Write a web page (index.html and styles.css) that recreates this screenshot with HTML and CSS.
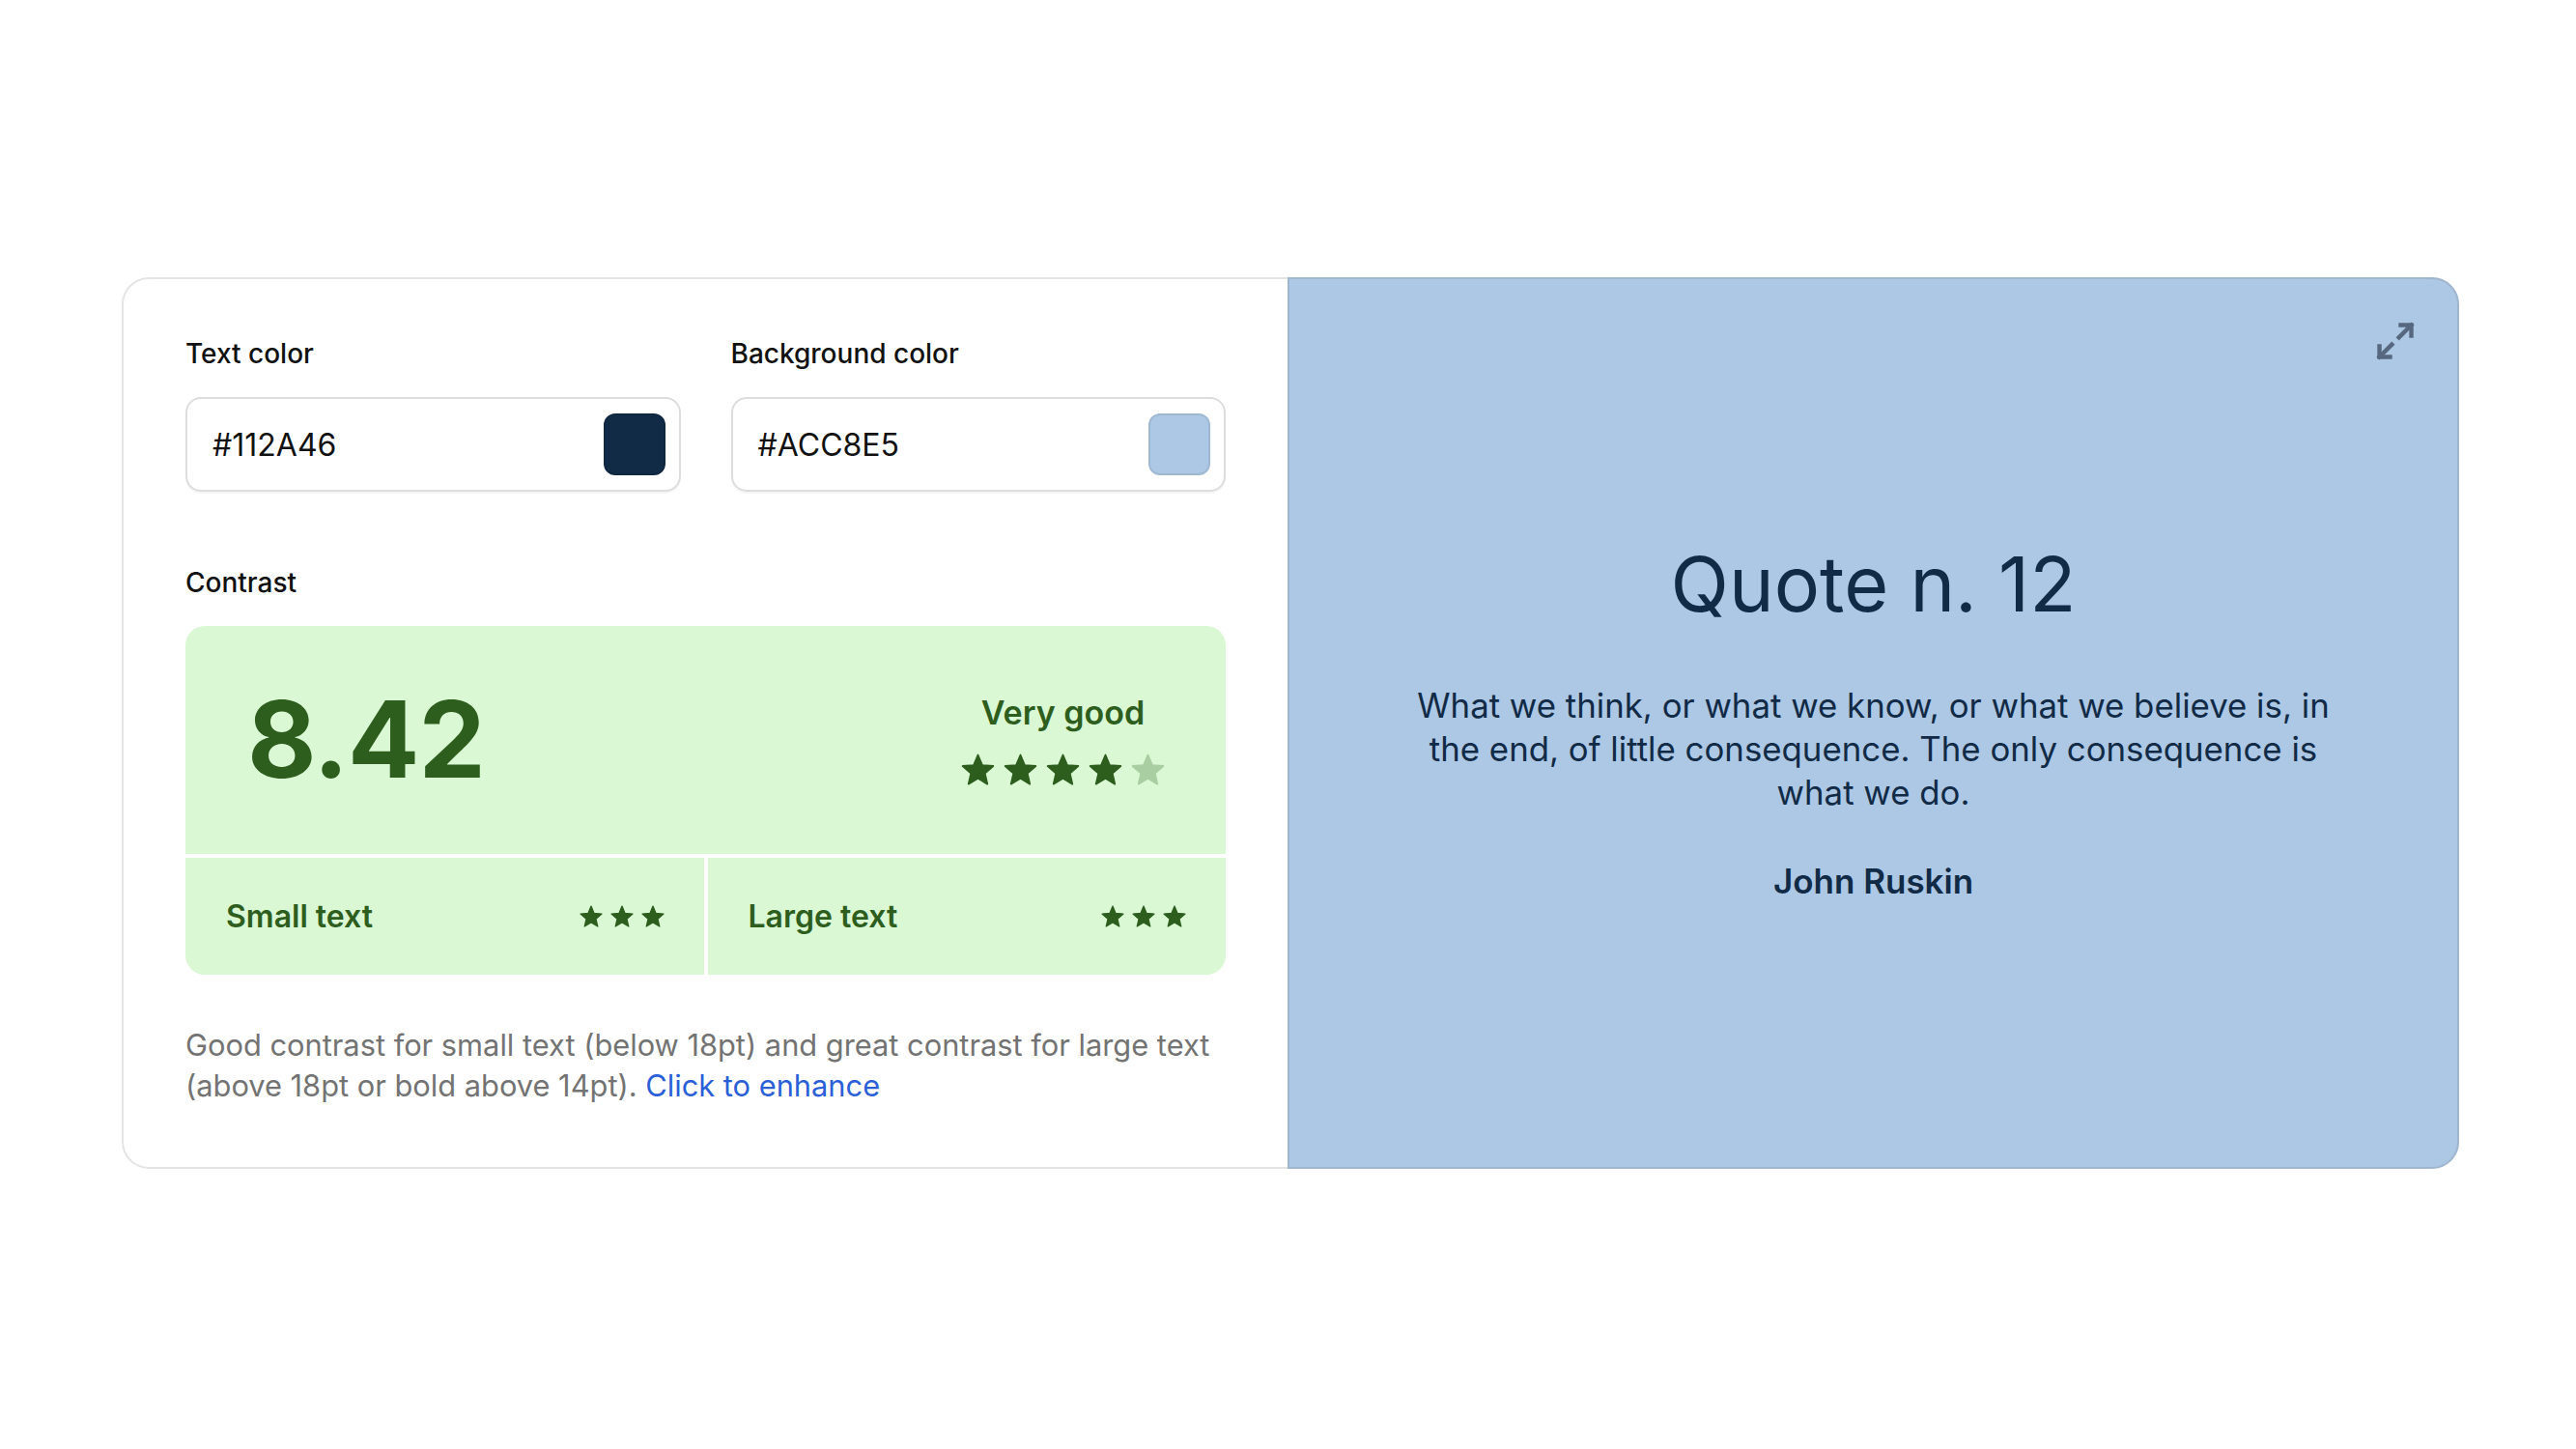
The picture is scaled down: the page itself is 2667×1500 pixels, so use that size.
FILE: index.html
```html
<!DOCTYPE html>
<html lang="en">
<head>
  <meta charset="UTF-8" />
  <title>Contrast checker</title>
  <link rel="stylesheet" href="styles.css">
</head>
<body>

  <svg class="defs" width="0" height="0">
    <symbol id="star" viewBox="0.6 0.6 22.8 21.8">
      <path d="M12 1.6 L14.94 8.55 L22.46 9.2 L16.76 14.15 L18.47 21.5 L12 17.6 L5.53 21.5 L7.24 14.15 L1.54 9.2 L9.06 8.55 Z" fill="currentColor" stroke="currentColor" stroke-width="1.2" stroke-linejoin="round" />
    </symbol>
  </svg>

  <div class="page">
    <div class="card">

      <div class="editor">
        <div class="fields">
          <div class="field">
            <label>Text color</label>
            <div class="color-input">
              <span>#112A46</span>
              <span class="swatch swatch-text"></span>
            </div>
          </div>
          <div class="field">
            <label>Background color</label>
            <div class="color-input">
              <span>#ACC8E5</span>
              <span class="swatch swatch-bg"></span>
            </div>
          </div>
        </div>

        <div class="contrast">
          <label>Contrast</label>
          <div class="score-box">
            <div class="score-main">
              <div class="score">8.42</div>
              <div class="rating">
                <div class="rating-text">Very good</div>
                <div class="stars big">
                  <svg><use href="#star" /></svg>
                  <svg><use href="#star" /></svg>
                  <svg><use href="#star" /></svg>
                  <svg><use href="#star" /></svg>
                  <svg class="off"><use href="#star" /></svg>
                </div>
              </div>
            </div>
            <div class="score-row">
              <div class="score-cell">
                <span>Small text</span>
                <div class="stars small">
                  <svg><use href="#star" /></svg>
                  <svg><use href="#star" /></svg>
                  <svg><use href="#star" /></svg>
                </div>
              </div>
              <div class="score-cell">
                <span>Large text</span>
                <div class="stars small">
                  <svg><use href="#star" /></svg>
                  <svg><use href="#star" /></svg>
                  <svg><use href="#star" /></svg>
                </div>
              </div>
            </div>
          </div>
          <p class="note">Good contrast for small text (below 18pt) and great contrast for large text (above 18pt or bold above 14pt). <a href="#">Click to enhance</a></p>
        </div>
      </div>

      <div class="preview">
        <button class="expand" title="Expand">
          <svg viewBox="0 0 24 24" fill="none" stroke="currentColor" stroke-width="2.4" stroke-linecap="square" stroke-linejoin="miter">
            <polyline points="15 3 21 3 21 9" />
            <polyline points="9 21 3 21 3 15" />
            <line x1="21" y1="3" x2="14" y2="10" />
            <line x1="3" y1="21" x2="10" y2="14" />
          </svg>
        </button>
        <h2>Quote n. 12</h2>
        <p class="quote">What we think, or what we know, or what we believe is, in the end, of little consequence. The only consequence is what we do.</p>
        <p class="author">John Ruskin</p>
      </div>

    </div>
  </div>

</body>
</html>
```

FILE: styles.css
```css
* {
  box-sizing: border-box;
}

body {
  margin: 0;
  background: #ffffff;
  font-family: 'Inter', 'Noto Sans', sans-serif;
  color: #111;
}

.defs {
  position: absolute;
}

.page {
  padding: 287px 0 0 126px;
}

.card {
  width: 2420px;
  display: grid;
  grid-template-columns: 1207px 1fr;
}

/* left side */
.editor {
  border: 2px solid #e4e4e4;
  border-right: none;
  border-radius: 28px 0 0 28px;
  padding: 60px 64px 63px 64px;
}

label {
  display: block;
  font-size: 28px;
  line-height: 34px;
  font-weight: 500;
  color: #111;
  margin-bottom: 28px;
}

.fields {
  display: grid;
  grid-template-columns: 1fr 1fr;
  gap: 52px;
}

.color-input {
  height: 98px;
  border: 2px solid #dddddd;
  border-radius: 16px;
  box-shadow: 0 2px 0 rgba(0,0,0,0.04);
  display: flex;
  align-items: center;
  justify-content: space-between;
  padding: 0 14px 0 26px;
  font-size: 32px;
  color: #111;
}

.swatch {
  width: 64px;
  height: 64px;
  border-radius: 12px;
  border: 2px solid rgba(0,0,0,0.07);
}

.swatch-text {
  background: #112A46;
}

.swatch-bg {
  background: #ACC8E5;
}

.contrast {
  margin-top: 77px;
}

.score-box {
  border-radius: 20px;
  overflow: hidden;
  display: flex;
  flex-direction: column;
  gap: 4px;
  background: #ffffff;
  color: #2d5e1e;
}

.score-main {
  height: 236px;
  background: #dbf8d5;
  display: flex;
  align-items: center;
  justify-content: space-between;
  padding: 0 63px 2px 64px;
}

.score {
  font-size: 110px;
  font-weight: 700;
  letter-spacing: -1px;
  line-height: 1;
}

.rating {
  display: flex;
  flex-direction: column;
  align-items: center;
  gap: 22px;
}

.rating-text {
  font-size: 34px;
  line-height: 40px;
  font-weight: 600;
}

.stars {
  display: flex;
}

.stars svg {
  color: #2d5e1e;
}

.stars.big {
  gap: 9px;
}

.stars.big svg {
  width: 35px;
  height: 33px;
}

.stars .off {
  color: #a9cea2;
}

.stars.small {
  gap: 8px;
}

.stars.small svg {
  width: 24px;
  height: 23px;
}

.score-row {
  display: grid;
  grid-template-columns: 1fr 1fr;
  gap: 4px;
}

.score-cell {
  height: 121px;
  background: #dbf8d5;
  display: flex;
  align-items: center;
  justify-content: space-between;
  padding: 0 41px 0 42px;
  font-size: 32px;
  font-weight: 600;
}

.note {
  margin: 52px 0 0 0;
  font-size: 30.8px;
  line-height: 42px;
  color: #737373;
}

.note a {
  color: #2a5fd8;
  text-decoration: none;
}

/* right side */
.preview {
  position: relative;
  background: #ACC8E5;
  border: 2px solid #a0b5ce;
  border-radius: 0 28px 28px 0;
  display: flex;
  flex-direction: column;
  align-items: center;
  justify-content: center;
  text-align: center;
  padding: 0 128px 8px 128px;
  color: #112A46;
}

.expand {
  position: absolute;
  top: 42px;
  right: 42px;
  width: 44px;
  height: 44px;
  padding: 0;
  border: none;
  background: none;
  color: #56687f;
  cursor: pointer;
}

.expand svg {
  width: 44px;
  height: 44px;
  display: block;
}

.preview h2 {
  margin: 0;
  font-size: 79px;
  line-height: 96px;
  font-weight: 400;
}

.quote {
  margin: 56px 0 0 0;
  font-size: 34.8px;
  line-height: 45px;
}

.author {
  margin: 48px 0 0 0;
  font-size: 35px;
  line-height: 42px;
  font-weight: 600;
}
```
